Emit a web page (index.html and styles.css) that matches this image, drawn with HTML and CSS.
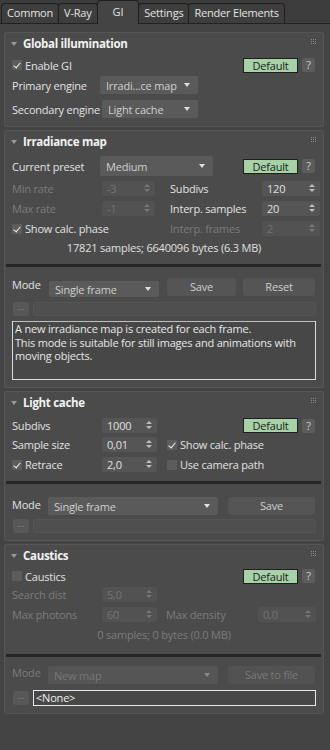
FILE: index.html
```html
<!DOCTYPE html>
<html>
<head>
<meta charset="utf-8">
<link rel="stylesheet" href="styles.css">
</head>
<body>
<div class="tabs">
  <div class="tab">Common</div>
  <div class="tab">V-Ray</div>
  <div class="tab active">GI</div>
  <div class="tab">Settings</div>
  <div class="tab">Render Elements</div>
</div>

<div class="panel p1">
  <div class="phead"><span class="tri"></span><span class="ptitle">Global illumination</span><svg class="grip" width="6" height="6" viewBox="0 0 6 6"><g fill="#8c8c8c"><rect x="0" y="0" width="1" height="1"/><rect x="2" y="0" width="1" height="1"/><rect x="4" y="0" width="1" height="1"/><rect x="0" y="2" width="1" height="1"/><rect x="2" y="2" width="1" height="1"/><rect x="4" y="2" width="1" height="1"/><rect x="0" y="4" width="1" height="1"/><rect x="2" y="4" width="1" height="1"/><rect x="4" y="4" width="1" height="1"/></g></svg></div>
  <div class="row r-enable">
    <label class="chk"><span class="box on"></span>Enable GI</label>
    <div class="defwrap"><span class="defbtn">Default</span><span class="q">?</span></div>
  </div>
  <div class="row r-pri">
    <span class="lbl w88">Primary engine</span>
    <span class="dd w98"><span class="ddtext">Irradi...ce map</span><span class="arr"></span></span>
  </div>
  <div class="row r-sec">
    <span class="lbl w90">Secondary engine</span>
    <span class="dd w96"><span class="ddtext">Light cache</span><span class="arr"></span></span>
  </div>
</div>

<div class="panel p2">
  <div class="phead"><span class="tri"></span><span class="ptitle">Irradiance map</span><svg class="grip" width="6" height="6" viewBox="0 0 6 6"><g fill="#8c8c8c"><rect x="0" y="0" width="1" height="1"/><rect x="2" y="0" width="1" height="1"/><rect x="4" y="0" width="1" height="1"/><rect x="0" y="2" width="1" height="1"/><rect x="2" y="2" width="1" height="1"/><rect x="4" y="2" width="1" height="1"/><rect x="0" y="4" width="1" height="1"/><rect x="2" y="4" width="1" height="1"/><rect x="4" y="4" width="1" height="1"/></g></svg></div>
  <div class="row r-preset">
    <span class="lbl w88">Current preset</span>
    <span class="dd tall w113"><span class="ddtext">Medium</span><span class="arr"></span></span>
    <div class="defwrap"><span class="defbtn">Default</span><span class="q">?</span></div>
  </div>
  <div class="grid2">
    <div class="row r-sp"><span class="lbl w90 dis">Min rate</span><span class="sp w53 dis"><span>-3</span><span class="spa"></span></span></div>
    <div class="row r-sp"><span class="lbl w92">Subdivs</span><span class="sp w58"><span>120</span><span class="spa"></span></span></div>
    <div class="row r-sp"><span class="lbl w90 dis">Max rate</span><span class="sp w53 dis"><span>-1</span><span class="spa"></span></span></div>
    <div class="row r-sp"><span class="lbl w92">Interp. samples</span><span class="sp w58"><span>20</span><span class="spa"></span></span></div>
    <div class="row r-sp"><label class="chk"><span class="box on"></span>Show calc. phase</label></div>
    <div class="row r-sp"><span class="lbl w92 dis">Interp. frames</span><span class="sp w58 dis"><span>2</span><span class="spa"></span></span></div>
  </div>
  <div class="info i2">17821 samples; 6640096 bytes (6.3 MB)</div>
  <div class="sep s2"></div>
  <div class="row r-mode m2">
    <span class="lbl mode w37">Mode</span>
    <span class="dd short w110"><span class="ddtext">Single frame</span><span class="arr"></span></span>
    <span class="btn w69">Save</span>
    <span class="btn w72">Reset</span>
  </div>
  <div class="row r-file f2">
    <span class="dots">...</span><span class="field"></span>
  </div>
  <div class="desc">A new irradiance map is created for each frame.<br>This mode is suitable for still images and animations with moving objects.</div>
</div>

<div class="panel p3">
  <div class="phead"><span class="tri"></span><span class="ptitle">Light cache</span><svg class="grip" width="6" height="6" viewBox="0 0 6 6"><g fill="#8c8c8c"><rect x="0" y="0" width="1" height="1"/><rect x="2" y="0" width="1" height="1"/><rect x="4" y="0" width="1" height="1"/><rect x="0" y="2" width="1" height="1"/><rect x="2" y="2" width="1" height="1"/><rect x="4" y="2" width="1" height="1"/><rect x="0" y="4" width="1" height="1"/><rect x="2" y="4" width="1" height="1"/><rect x="4" y="4" width="1" height="1"/></g></svg></div>
  <div class="row r-sp lc1">
    <span class="lbl w90">Subdivs</span><span class="sp w55"><span>1000</span><span class="spa"></span></span>
    <div class="defwrap"><span class="defbtn">Default</span><span class="q">?</span></div>
  </div>
  <div class="row r-sp lc2">
    <span class="lbl w90">Sample size</span><span class="sp w55"><span>0,01</span><span class="spa"></span></span>
    <label class="chk ml10"><span class="box on"></span>Show calc. phase</label>
  </div>
  <div class="row r-sp lc3">
    <label class="chk w90"><span class="box on"></span>Retrace</label><span class="sp w55"><span>2,0</span><span class="spa"></span></span>
    <label class="chk ml10"><span class="box"></span>Use camera path</label>
  </div>
  <div class="sep s3"></div>
  <div class="row r-mode m3">
    <span class="lbl mode w36">Mode</span>
    <span class="dd w170"><span class="ddtext">Single frame</span><span class="arr"></span></span>
    <span class="btn w87">Save</span>
  </div>
  <div class="row r-file f3">
    <span class="dots">...</span><span class="field"></span>
  </div>
</div>

<div class="panel p4">
  <div class="phead"><span class="tri"></span><span class="ptitle">Caustics</span><svg class="grip" width="6" height="6" viewBox="0 0 6 6"><g fill="#8c8c8c"><rect x="0" y="0" width="1" height="1"/><rect x="2" y="0" width="1" height="1"/><rect x="4" y="0" width="1" height="1"/><rect x="0" y="2" width="1" height="1"/><rect x="2" y="2" width="1" height="1"/><rect x="4" y="2" width="1" height="1"/><rect x="0" y="4" width="1" height="1"/><rect x="2" y="4" width="1" height="1"/><rect x="4" y="4" width="1" height="1"/></g></svg></div>
  <div class="row r-enable c1">
    <label class="chk"><span class="box"></span>Caustics</label>
    <div class="defwrap"><span class="defbtn">Default</span><span class="q">?</span></div>
  </div>
  <div class="row r-sp c2">
    <span class="lbl w90 dis">Search dist</span><span class="sp w55 dis"><span>5,0</span><span class="spa"></span></span>
  </div>
  <div class="row r-sp c3">
    <span class="lbl w90 dis">Max photons</span><span class="sp w55 dis"><span>60</span><span class="spa"></span></span>
    <span class="lbl w92 ml9 dis">Max density</span><span class="sp w58 dis"><span>0,0</span><span class="spa"></span></span>
  </div>
  <div class="info dis i4">0 samples; 0 bytes (0.0 MB)</div>
  <div class="sep s4"></div>
  <div class="row r-mode m4">
    <span class="lbl mode w36 dis">Mode</span>
    <span class="dd w170 dis"><span class="ddtext">New map</span><span class="arr"></span></span>
    <span class="btn w87 dis">Save to file</span>
  </div>
  <div class="row r-file f4">
    <span class="dots">...</span><span class="field white">&lt;None&gt;</span>
  </div>
</div>
</body>
</html>
```

FILE: styles.css
```css
* { box-sizing: border-box; }
html, body { margin: 0; padding: 0; }
body {
  width: 330px;
  height: 750px;
  background: #444444;
  font-family: "Open Sans", "Noto Sans", sans-serif;
  font-size: 11px;
  letter-spacing: -0.2px;
  color: #e2e2e2;
  overflow: hidden;
}
.tabs {
  display: flex;
  align-items: flex-end;
  height: 24px;
  padding-left: 1px;
  border-bottom: 1px solid #222;
  background: #3c3c3c;
}
.tab {
  height: 20px;
  line-height: 18px;
  padding: 0 5px;
  border: 1px solid #1f1f1f;
  border-bottom: none;
  border-radius: 4px 4px 0 0;
  background: #3e3e3e;
  color: #e4e4e4;
  margin-right: -1px;
}
.tab.active {
  line-height: 21px;
  padding: 0 15px;
  background: #444444;
  margin-bottom: -1px;
  height: 24px;
}
.panel {
  margin: 3px 6px 0 4px;
  background: #4b4b4b;
  border: 1px solid #555;
  border-radius: 2px;
  padding: 0 7px 0 7px;
}
.p1 { margin-top: 8px; height: 95px; }
.p2 { margin-top: 3px; height: 258px; }
.p3 { margin-top: 3px; height: 150px; }
.p4 { margin-top: 3px; height: 170px; }
.phead {
  display: flex;
  align-items: center;
  height: 18px;
  padding-top: 3px;
  position: relative;
}
.tri {
  width: 0; height: 0;
  border-left: 3px solid transparent;
  border-right: 3px solid transparent;
  border-top: 4px solid #9a9a9a;
  margin-left: -1px;
  margin-right: 6px;
}
.ptitle { font-weight: bold; font-size: 11.5px; color: #f2f2f2; letter-spacing: -0.3px; }
.grip {
  position: absolute;
  right: -1px; top: 6px;
}
.row { display: flex; align-items: center; position: relative; }
.lbl { white-space: nowrap; }
.dis { color: #7b7b7b; }
.w88 { width: 88px; }
.w90 { width: 90px; }
.w92 { width: 92px; }
.w36 { width: 36px; }
.w37 { width: 37px; }
.ml10 { margin-left: 10px; }
.ml9 { margin-left: 9px; }
.chk { display: flex; align-items: center; white-space: nowrap; }
.box {
  width: 10px; height: 10px;
  background: #5c5c5c;
  margin-right: 3px;
  position: relative;
}
.box.on::after {
  content: "";
  position: absolute;
  left: 3px; top: 1px;
  width: 3px; height: 6px;
  border-right: 1.5px solid #f0f0f0;
  border-bottom: 1.5px solid #f0f0f0;
  transform: rotate(40deg);
}
.defwrap {
  position: absolute;
  right: 1px;
  display: flex;
  align-items: center;
}
.defbtn {
  width: 55px; height: 15px;
  background: #a7d2a7;
  border: 1px solid #1e1e1e;
  color: #1b1b1b;
  text-align: center;
  line-height: 13px;
  font-size: 11px;
}
.q {
  width: 13px; height: 14px;
  margin-left: 4px;
  background: #5c5c5c;
  border-radius: 2px;
  text-align: center;
  line-height: 14px;
  color: #cfcfcf;
}
.dd {
  height: 18px;
  background: #5a5a5a;
  border-radius: 2px;
  display: flex;
  align-items: center;
  padding-left: 6px;
  position: relative;
  color: #cfcfcf;
}
.dd.tall { height: 20px; }
.dd.short { height: 16px; margin-top: 3px; }
.dd.dis { color: #777; background: #555; }
.arr {
  position: absolute;
  right: 8px; top: 50%;
  margin-top: -2px;
  border-left: 3px solid transparent;
  border-right: 3px solid transparent;
  border-top: 4px solid #e0e0e0;
}
.dd.dis .arr { border-top-color: #888; }
.w98 { width: 98px; }
.w96 { width: 96px; }
.w113 { width: 113px; }
.w110 { width: 110px; }
.w170 { width: 170px; }
.r-enable { height: 20px; margin-top: 4px; }
.r-pri { height: 18px; margin-top: 1px; }
.r-sec { height: 18px; margin-top: 6px; }
.r-preset { height: 20px; margin-top: 7px; }
.grid2 {
  display: grid;
  grid-template-columns: 155px 150px;
  column-gap: 3px;
  row-gap: 5px;
  margin-top: 5px;
}
.r-sp { height: 15px; }
.sp {
  height: 15px;
  background: #555;
  border-radius: 2px;
  display: flex;
  align-items: center;
  padding-left: 5px;
  position: relative;
  color: #e0e0e0;
}
.sp.dis { color: #727272; background: #525252; }
.spa {
  position: absolute;
  right: 5px; top: 3px;
  width: 6px; height: 10px;
}
.spa::before, .spa::after {
  content: "";
  position: absolute;
  left: 0;
  border-left: 3px solid transparent;
  border-right: 3px solid transparent;
}
.spa::before { top: 0; border-bottom: 3px solid #bdbdbd; }
.spa::after { top: 5px; border-top: 3px solid #bdbdbd; }
.sp.dis .spa::before { border-bottom-color: #777; }
.sp.dis .spa::after { border-top-color: #777; }
.w53 { width: 53px; }
.w55 { width: 55px; }
.w58 { width: 58px; }
.info {
  text-align: center;
  height: 18px;
  line-height: 18px;
  color: #e0e0e0;
}
.info.dis { color: #7b7b7b; }
.i2 { margin-top: 3px; }
.i4 { margin-top: 4px; }
.sep {
  height: 3px;
  background: #262626;
  margin: 0 -5px 0 -6px;
}
.s2 { margin-top: 7px; }
.s3 { margin-top: 9px; }
.s4 { margin-top: 10px; }
.r-mode { height: 18px; align-items: flex-start; }
.m2 { height: 19px; margin-top: 11px; }
.m3 { margin-top: 13px; }
.m4 { margin-top: 9px; }
.mode { line-height: 14px; }
.m3 .mode { line-height: 16px; }
.btn {
  height: 18px;
  background: #555;
  border-radius: 3px;
  text-align: center;
  line-height: 18px;
  color: #cfcfcf;
  margin-left: 8px;
}
.btn.dis { color: #7a7a7a; background: #525252; }
.w69 { width: 69px; }
.w72 { width: 72px; margin-left: 7px; }
.w87 { width: 87px; margin-left: 10px; }
.r-file { height: 14px; }
.f2 { margin-top: 5px; }
.f3 { margin-top: 4px; }
.f4 { margin-top: 6px; height: 16px; }
.dots {
  width: 16px; height: 14px;
  background: #575757;
  border-radius: 2px;
  color: #8a8a8a;
  font-size: 9px;
  text-align: center;
  line-height: 10px;
  margin-left: 1px;
  letter-spacing: 0;
}
.field {
  flex: 1;
  align-self: stretch;
  margin-left: 4px;
  background: #4f4f4f;
  border: 1px solid #555;
  border-radius: 2px;
}
.field.white {
  border: 1px solid #e8e8e8;
  border-radius: 0;
  background: #474747;
  color: #f0f0f0;
  line-height: 14px;
  padding-left: 2px;
}
.desc {
  margin-top: 5px;
  height: 59px;
  border: 1px solid #dcdcdc;
  border-top-color: #bfbfbf;
  background: #474747;
  color: #e8e8e8;
  padding: 0 2px;
  line-height: 13.5px;
}
.lc1 { margin-top: 8px; }
.lc2 { margin-top: 4px; }
.lc3 { margin-top: 5px; }
.c1 { margin-top: 3px; }
.c2 { margin-top: 1px; }
.c3 { margin-top: 5px; }
```
